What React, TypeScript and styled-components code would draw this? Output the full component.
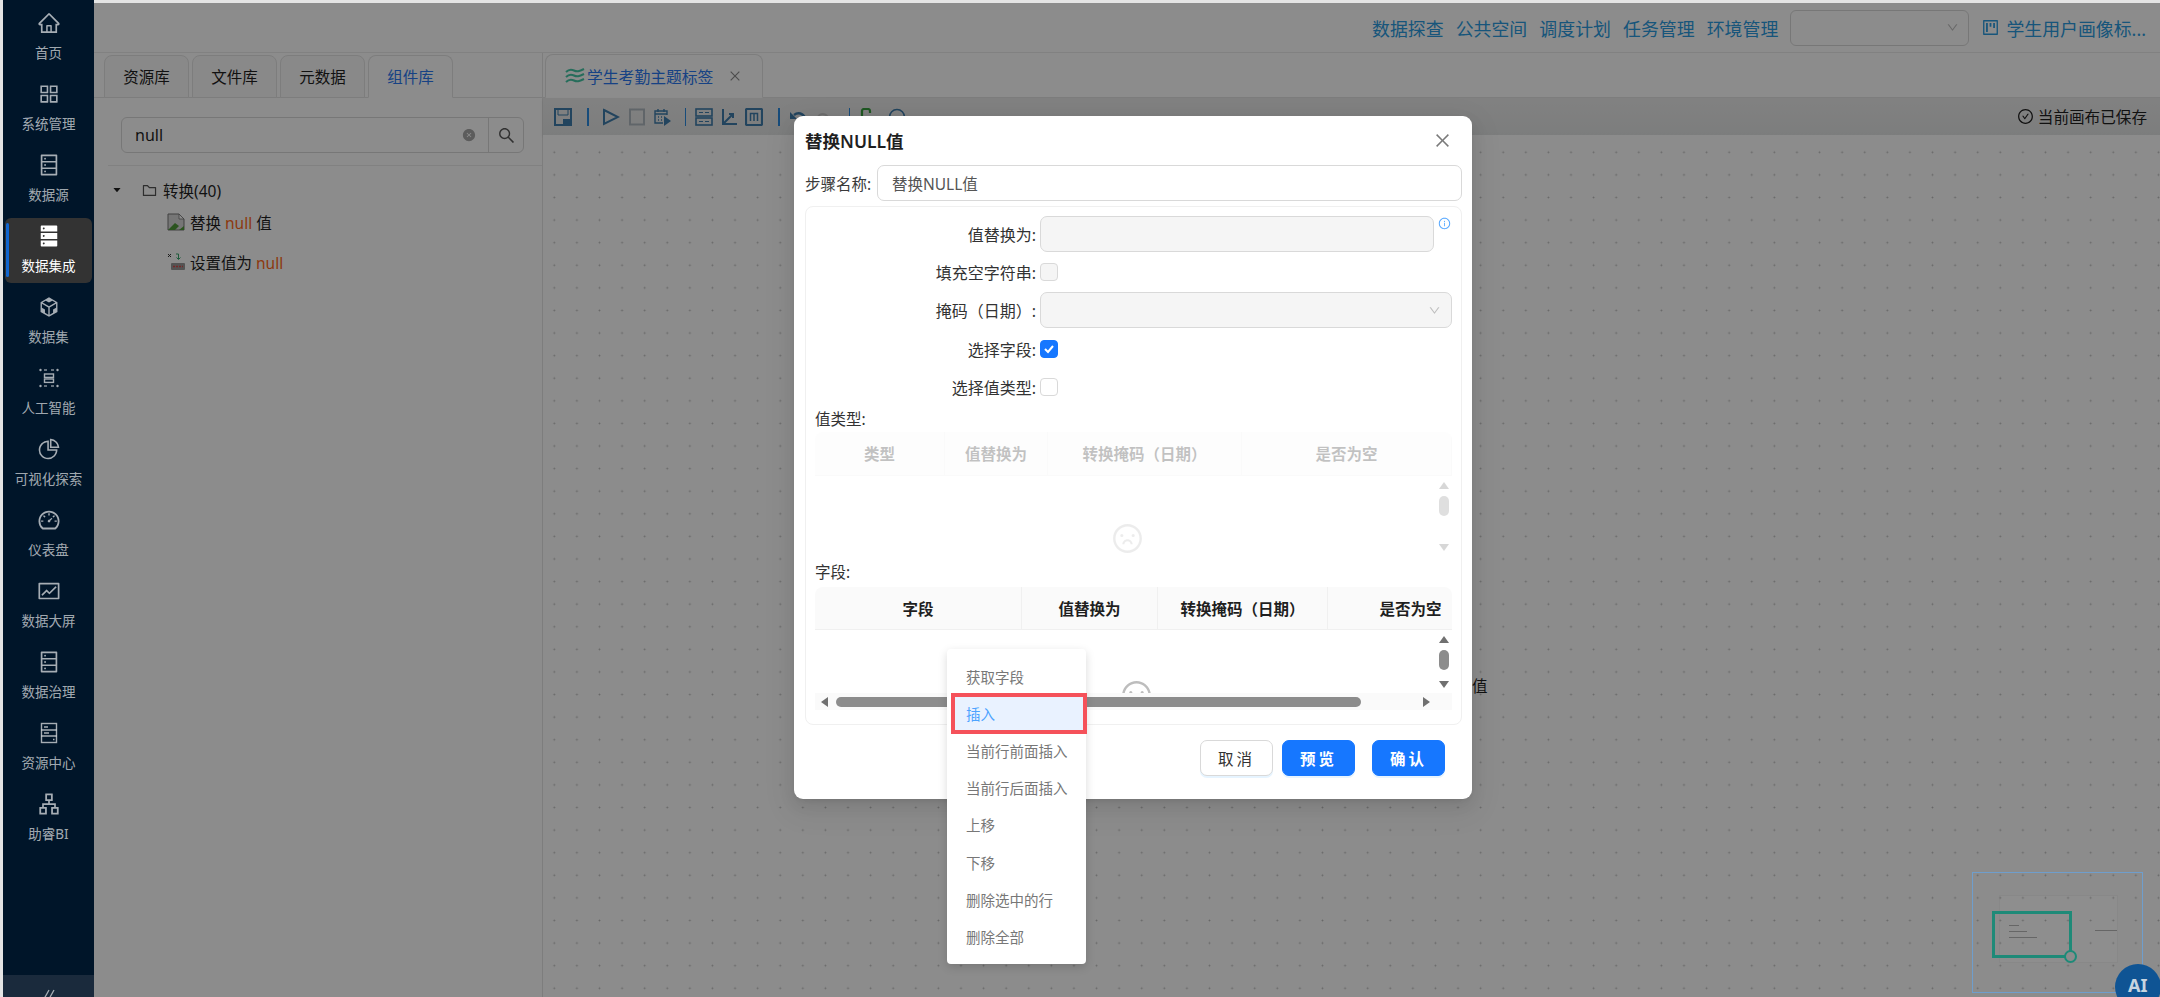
import React from "react";
import styled, { createGlobalStyle } from "styled-components";
import {
  AiOutlineHome,
  AiOutlineAppstore,
  AiOutlineDatabase,
  AiFillDatabase,
  AiOutlineCodeSandbox,
  AiOutlinePieChart,
  AiOutlineDashboard,
  AiOutlineFund,
  AiOutlineApartment,
  AiOutlineSearch,
  AiFillCloseCircle,
  AiOutlineFolder,
  AiFillCaretDown,
  AiOutlineClose,
  AiOutlineDown,
  AiOutlineInfoCircle,
  AiOutlineFrown,
  AiOutlineCheckCircle,
  AiOutlineProject,
} from "react-icons/ai";

const GlobalStyle = createGlobalStyle`
  html, body {
    margin: 0;
    height: 100%;
    background: #e4e4e4;
    overflow: hidden;
  }
  body {
    font-family: "Noto Sans", "Noto Sans CJK SC", sans-serif;
    font-size: 15.5px;
    color: #1f1f1f;
  }
  * { box-sizing: border-box; }
`;

const Page = styled.div`
  display: flex;
  height: 997px;
  padding-left: 3px;
`;

/* left nav, sits above the modal mask */
const Sidebar = styled.aside`
  width: 91px;
  flex: none;
  display: flex;
  flex-direction: column;
  background: #001529;
  position: relative;
`;
const NavList = styled.nav`
  flex: 1;
  display: flex;
  flex-direction: column;
  gap: 6px;
  padding: 5px 2px 0;
`;
const NavItem = styled.div<{ $active?: boolean }>`
  position: relative;
  height: 65px;
  display: flex;
  flex-direction: column;
  align-items: center;
  padding-top: 6px;
  gap: 9px;
  border-radius: 6px;
  font-size: 13.5px;
  line-height: 18px;
  color: ${(p) => (p.$active ? "#fff" : "rgba(255,255,255,.65)")};
  background: ${(p) => (p.$active ? "#333" : "transparent")};
  svg {
    width: 24px;
    height: 24px;
  }
  &::before {
    content: "";
    display: ${(p) => (p.$active ? "block" : "none")};
    position: absolute;
    left: 1px;
    top: 5px;
    bottom: 6px;
    width: 3px;
    border-radius: 2px;
    background: #1266cf;
  }
`;
const Collapse = styled.div`
  height: 22px;
  background: #1a2a3c;
  color: #a6adb4;
  display: flex;
  justify-content: center;
  align-items: flex-start;
  padding-top: 14px;
  overflow: hidden;
`;

const Main = styled.main`
  position: relative;
  flex: 1;
  min-width: 0;
  margin-top: 3px;
  display: flex;
  flex-direction: column;
  background: #fff;
`;
const Mask = styled.div`
  position: absolute;
  inset: 0;
  z-index: 10;
  background: rgba(0, 0, 0, 0.45);
`;

const Header = styled.header`
  height: 50px;
  flex: none;
  display: flex;
  justify-content: flex-end;
  align-items: center;
  padding-right: 14px;
  border-bottom: 1px solid #ececec;
`;
const HeaderLink = styled.a`
  font-size: 17.9px;
  white-space: nowrap;
  color: #2a9be0;
  margin-left: 12.1px;
`;
const ProjectSelect = styled.div`
  width: 179px;
  height: 36px;
  margin-left: 12px;
  border: 1px solid #d9d9d9;
  border-radius: 6px;
  display: flex;
  justify-content: flex-end;
  align-items: center;
  padding-right: 9px;
  color: #bfbfbf;
`;
const ProjectName = styled(HeaderLink)`
  display: flex;
  align-items: center;
  gap: 6px;
  svg {
    width: 19px;
    height: 19px;
  }
`;

const Body = styled.div`
  flex: 1;
  min-height: 0;
  display: flex;
`;

const LeftPanel = styled.section`
  width: 449px;
  flex: none;
  border-right: 1px solid #e4e4e4;
`;
const TabBar = styled.div<{ $pad: number }>`
  height: 45px;
  display: flex;
  align-items: flex-end;
  gap: 3px;
  padding-left: ${(p) => p.$pad}px;
  border-bottom: 1px solid #e4e4e4;
`;
const Tab = styled.div<{ $active?: boolean }>`
  width: 85px;
  height: 43px;
  margin-bottom: -1px;
  display: flex;
  justify-content: center;
  align-items: center;
  font-size: 15.5px;
  border: 1px solid #e4e4e4;
  border-bottom-color: ${(p) => (p.$active ? "#fff" : "#e4e4e4")};
  border-radius: 8px 8px 0 0;
  background: ${(p) => (p.$active ? "#fff" : "#fafafa")};
  color: ${(p) => (p.$active ? "#2a78f0" : "#1f1f1f")};
`;
const SearchRow = styled.div`
  margin-left: 14px;
  padding: 19px 0 12px 13px;
  border-bottom: 1px solid #ececec;
`;
const SearchBox = styled.div`
  width: 403px;
  height: 36px;
  display: flex;
  align-items: center;
  border: 1px solid #d9d9d9;
  border-radius: 6px;
  padding-left: 13px;
  font-size: 16px;
`;
const SearchText = styled.span`
  flex: 1;
`;
const SearchButton = styled.span`
  width: 35px;
  height: 100%;
  margin-left: 12px;
  display: flex;
  justify-content: center;
  align-items: center;
  border-left: 1px solid #d9d9d9;
  font-size: 19px;
  color: #595959;
`;
const Tree = styled.div`
  padding: 12px 0 0 18px;
  display: flex;
  flex-direction: column;
  font-size: 15.5px;
`;
const TreeRow = styled.div<{ $indent?: number; $top?: number }>`
  display: flex;
  align-items: center;
  height: 24px;
  gap: 5px;
  margin-top: ${(p) => p.$top ?? 0}px;
  padding-left: ${(p) => p.$indent ?? 0}px;
`;
const Hit = styled.span`
  color: #ff6a1a;
`;

const RightPanel = styled.section`
  flex: 1;
  min-width: 0;
  display: flex;
  flex-direction: column;
`;
const DocTab = styled.div`
  width: 218px;
  height: 44px;
  margin-bottom: -1px;
  display: flex;
  align-items: center;
  gap: 2px;
  padding-left: 19px;
  font-size: 15.8px;
  color: #2a78f0;
  background: #fff;
  border: 1px solid #e4e4e4;
  border-bottom-color: #fff;
  border-radius: 8px 8px 0 0;
`;
const DocClose = styled.span`
  display: flex;
  margin-left: 13px;
  color: #8c8c8c;
`;
const Toolbar = styled.div`
  height: 37px;
  flex: none;
  display: flex;
  align-items: center;
  padding-left: 11px;
  background: linear-gradient(180deg, #ececec, #e2e4e4);
  box-shadow: 0 2px 3px rgba(0, 0, 0, 0.1);
  color: #3e7cab;
`;
const ToolGroup = styled.div<{ $gap?: number }>`
  display: flex;
  align-items: center;
  gap: ${(p) => p.$gap ?? 0}px;
`;
const ToolSep = styled.i<{ $l: number; $r: number }>`
  width: 1.5px;
  height: 18px;
  margin: 0 ${(p) => p.$r}px 0 ${(p) => p.$l}px;
  background: #2a8be0;
`;
const Saved = styled.div`
  margin-left: auto;
  padding-right: 13px;
  display: flex;
  align-items: center;
  gap: 4px;
  font-size: 15.6px;
  color: #1f1f1f;
  svg {
    width: 17px;
    height: 17px;
  }
`;
const Canvas = styled.div`
  position: relative;
  flex: 1;
  background-color: #fff;
  background-image: radial-gradient(circle, #bdbdbd 0.8px, transparent 1.1px);
  background-size: 22.6px 22.6px;
  background-position: 0 6px;
`;
const NodeText = styled.span`
  position: absolute;
  left: 1378px;
  top: 671px;
`;

/* the dialog */
const Modal = styled.div`
  position: absolute;
  z-index: 20;
  left: 700px;
  top: 113px;
  width: 678px;
  height: 683px;
  padding: 0 10px 0 11px;
  display: flex;
  flex-direction: column;
  background: #fff;
  border-radius: 9px;
  box-shadow: 0 6px 16px rgba(0, 0, 0, 0.08), 0 3px 6px -4px rgba(0, 0, 0, 0.12),
    0 9px 28px 8px rgba(0, 0, 0, 0.05);
`;
const ModalHead = styled.div`
  height: 49px;
  flex: none;
  display: flex;
  justify-content: space-between;
  align-items: center;
  padding-right: 10px;
`;
const ModalTitle = styled.h2`
  margin: 0;
  font-size: 17.5px;
  font-weight: 600;
`;
const CloseBtn = styled.span`
  display: flex;
  font-size: 19px;
  color: #7a7a7a;
`;
const NameRow = styled.div`
  height: 36px;
  flex: none;
  display: flex;
  align-items: center;
  gap: 4px;
  font-size: 15.5px;
  color: #3a3a3a;
`;
const NameLabel = styled.span`
  width: 68px;
  flex: none;
  white-space: nowrap;
`;
const TextInput = styled.div<{ $disabled?: boolean; $w?: number }>`
  height: 36px;
  display: flex;
  align-items: center;
  justify-content: space-between;
  padding: 0 10px 0 14px;
  border: 1px solid #d9d9d9;
  border-radius: 7px;
  color: ${(p) => (p.$disabled ? "#bfbfbf" : "#555")};
  background: ${(p) => (p.$disabled ? "#f5f5f5" : "#fff")};
  flex: ${(p) => (p.$w ? "none" : "1")};
  width: ${(p) => (p.$w ? `${p.$w}px` : "auto")};
`;
const Card = styled.div`
  flex: none;
  height: 519px;
  margin-top: 5px;
  padding: 9px 9px 0;
  border: 1px solid #f0f0f0;
  border-radius: 8px;
`;
const FormRow = styled.div<{ $h: number }>`
  height: ${(p) => p.$h}px;
  display: flex;
  align-items: center;
  gap: 4px;
  margin-left: -8px;
`;
const FormLabel = styled.label`
  width: 229px;
  flex: none;
  text-align: right;
  font-size: 16px;
  color: #333;
  white-space: nowrap;
`;
const Check = styled.span<{ $on?: boolean; $off?: boolean }>`
  width: 18px;
  height: 18px;
  display: flex;
  justify-content: center;
  align-items: center;
  border-radius: 4px;
  border: 1px solid ${(p) => (p.$on ? "#1677ff" : "#d9d9d9")};
  background: ${(p) => (p.$on ? "#1677ff" : p.$off ? "#f5f5f5" : "#fff")};
`;
const Info = styled.span`
  display: flex;
  align-self: flex-start;
  margin: 1px 0 0 0;
  font-size: 13px;
  color: #4da3ff;
`;
const SectionLabel = styled.div<{ $h: number }>`
  height: ${(p) => p.$h}px;
  display: flex;
  align-items: center;
  color: #333;
`;
const TableBox = styled.div<{ $h: number; $faint?: boolean }>`
  width: 637px;
  height: ${(p) => p.$h}px;
  display: flex;
  flex-direction: column;
  overflow: hidden;
  border-radius: 8px 8px 0 0;
  opacity: ${(p) => (p.$faint ? 0.27 : 1)};
`;
const TableHead = styled.div<{ $cols: string; $h: number }>`
  height: ${(p) => p.$h}px;
  flex: none;
  display: grid;
  grid-template-columns: ${(p) => p.$cols};
  background: #fafafa;
  border-bottom: 1px solid #f0f0f0;
`;
const HeadCell = styled.div`
  display: flex;
  justify-content: center;
  align-items: center;
  font-weight: 600;
  white-space: nowrap;
  border-right: 1px solid #f0f0f0;
`;
const TableBody = styled.div`
  flex: 1;
  min-height: 0;
  display: flex;
`;
const EmptyArea = styled.div<{ $top: number; $shift: number }>`
  flex: 1;
  display: flex;
  justify-content: center;
  overflow: hidden;
  padding: ${(p) => p.$top}px 0 0 ${(p) => p.$shift}px;
  font-size: 33px;
  color: #bdbdbd;
`;
const VScroll = styled.div`
  width: 17px;
  flex: none;
  display: flex;
  flex-direction: column;
  align-items: center;
  padding: 6px 0 5px;
  background: #fff;
`;
const VThumb = styled.i`
  width: 10px;
  height: 20px;
  margin: 7px 0 3px;
  border-radius: 5px;
  background: #8c8c8c;
`;
const HScroll = styled.div`
  height: 17px;
  flex: none;
  display: flex;
  align-items: center;
  padding: 0 22px 0 6px;
  background: #fafafa;
`;
const HThumb = styled.i`
  width: 525px;
  height: 10px;
  margin: 0 auto 0 8px;
  border-radius: 5px;
  background: #8c8c8c;
`;
const Arrow = styled.i<{ $dir: "up" | "down" | "left" | "right" }>`
  width: 0;
  height: 0;
  flex: none;
  border-style: solid;
  border-color: transparent;
  border-width: ${(p) =>
    p.$dir === "up"
      ? "0 5.5px 7px"
      : p.$dir === "down"
        ? "7px 5.5px 0"
        : p.$dir === "left"
          ? "5.5px 7px 5.5px 0"
          : "5.5px 0 5.5px 7px"};
  ${(p) =>
    p.$dir === "up"
      ? "border-bottom-color: #707070;"
      : p.$dir === "down"
        ? "border-top-color: #707070; margin-top: auto;"
        : p.$dir === "left"
          ? "border-right-color: #707070;"
          : "border-left-color: #707070;"}
`;
const Footer = styled.div`
  display: flex;
  justify-content: flex-end;
  padding: 15px 17px 0 0;
`;
const Btn = styled.button<{ $primary?: boolean; $ml?: number }>`
  width: 73px;
  height: 36px;
  margin-left: ${(p) => p.$ml ?? 0}px;
  font: inherit;
  font-size: 15.5px;
  letter-spacing: 3px;
  font-weight: ${(p) => (p.$primary ? 600 : 400)};
  border-radius: 7px;
  border: 1px solid ${(p) => (p.$primary ? "#1677ff" : "#d9d9d9")};
  background: ${(p) => (p.$primary ? "#1677ff" : "#fff")};
  color: ${(p) => (p.$primary ? "#fff" : "#333")};
  box-shadow: 0 2px 0 rgba(5, 145, 255, 0.1);
`;

/* right click menu */
const Menu = styled.ul`
  position: absolute;
  left: 153px;
  top: 533px;
  width: 139px;
  margin: 0;
  padding: 8.5px 0 9px;
  list-style: none;
  background: #fff;
  border-radius: 4px;
  box-shadow: 0 3px 10px rgba(0, 0, 0, 0.15);
`;
const MenuItem = styled.li<{ $active?: boolean }>`
  position: relative;
  height: 37.2px;
  display: flex;
  align-items: center;
  padding-left: 19px;
  font-size: 14.5px;
  white-space: nowrap;
  color: ${(p) => (p.$active ? "#4da3ff" : "#777")};
  background: ${(p) =>
    p.$active ? "linear-gradient(90deg, #fff 4px, #e9f2ff 4px)" : "transparent"};
  &::after {
    content: "";
    display: ${(p) => (p.$active ? "block" : "none")};
    position: absolute;
    left: 4px;
    right: -1px;
    top: -2px;
    bottom: -2px;
    border: 4px solid #f5515a;
  }
`;

/* minimap and assistant button float over the canvas */
const MiniMap = styled.div`
  position: absolute;
  z-index: 15;
  left: 1878px;
  top: 869px;
  width: 171px;
  height: 121px;
  border: 1.5px solid #6f9ecc;
`;
const MiniPage = styled.div`
  position: absolute;
  left: 26px;
  top: 22px;
  width: 119px;
  height: 68px;
  background: rgba(255, 255, 255, 0.02);
  border: 1px solid rgba(0, 0, 0, 0.04);
`;
const MiniFrame = styled.div`
  position: absolute;
  left: 19px;
  top: 38px;
  width: 80px;
  height: 47px;
  padding-top: 6px;
  border: 3px solid #1e8a78;
`;
const MiniHandle = styled.i`
  position: absolute;
  right: -8px;
  bottom: -8px;
  width: 13px;
  height: 13px;
  border-radius: 50%;
  background: #8c8c8c;
  border: 2.5px solid #1e8a78;
`;
const MiniLine = styled.i<{ $w: number }>`
  display: block;
  width: ${(p) => p.$w}px;
  height: 1px;
  margin: 5px 0 0 14px;
  background: #666;
`;
const MiniNote = styled.i`
  position: absolute;
  right: 25px;
  top: 57px;
  width: 22px;
  height: 1px;
  background: #666;
`;
const AiBubble = styled.div`
  position: absolute;
  z-index: 15;
  left: 2021px;
  top: 961px;
  width: 46px;
  height: 46px;
  padding: 9px 0 0 13px;
  border-radius: 50%;
  background: #0f5494;
  color: #c8d4e0;
  font-size: 18px;
  font-weight: 700;
`;

const IconSvg = styled.svg<{ $w?: number }>`
  width: ${(p) => p.$w ?? 18}px;
  height: 18px;
  flex: none;
  display: block;
`;

const ScanIcon = () => (
  <svg viewBox="0 0 24 24" fill="none" stroke="currentColor" strokeWidth="1.4">
    <rect x="7.5" y="8" width="9" height="3.4" />
    <rect x="7.5" y="13" width="9" height="3.4" />
    <g fill="currentColor" stroke="none">
      <circle cx="3.5" cy="4" r="1.2" />
      <circle cx="20.5" cy="4" r="1.2" />
      <circle cx="3.5" cy="20" r="1.2" />
      <circle cx="20.5" cy="20" r="1.2" />
      <rect x="7" y="3.4" width="3" height="1.2" />
      <rect x="14" y="3.4" width="3" height="1.2" />
      <rect x="7" y="19.4" width="3" height="1.2" />
      <rect x="14" y="19.4" width="3" height="1.2" />
    </g>
  </svg>
);
const ServerIcon = () => (
  <svg viewBox="0 0 24 24" fill="none" stroke="currentColor" strokeWidth="1.4">
    <rect x="4.5" y="2.5" width="15" height="19" />
    <path d="M4.500 9h15M4.500 15h15M7 6h4M7 12h5M16 18.500h1.500" />
  </svg>
);
const WaveIcon = () => (
  <IconSvg viewBox="0 0 20 18" $w={20} fill="none" stroke="#46c7a6" strokeWidth="2">
    <path d="M1 5c3-3 5-3 8-1.500s5 1 10-1.500M1 10c3-3 5-3 8-1.500s5 1 10-1.500M1 15c3-3 5-3 8-1.500s5 1 10-1.500" />
  </IconSvg>
);
const BrokenImage = () => (
  <IconSvg viewBox="0 0 18 18">
    <path d="M1 1h11l5 5v11H1z" fill="#d8d8d8" stroke="#777" strokeWidth="1" />
    <path d="M1 17l7-7 4 3-4 4z" fill="#4f9a3a" />
    <path d="M12 17l5-4v4z" fill="#4f9a3a" />
    <path d="M12 1l5 5h-5z" fill="#fff" stroke="#777" strokeWidth=".8" />
  </IconSvg>
);
const SetValueIcon = () => (
  <IconSvg viewBox="0 0 18 18" fill="none">
    <path d="M1 1l3 3M4 1L1 4" stroke="#333" strokeWidth="1" />
    <path d="M9 1h2.500v5M9.500 4.500l2 2 2-2" stroke="#3aa76d" strokeWidth="1" />
    <rect x="4" y="10" width="14" height="7" rx="1" fill="#9a9a9a" />
    <path d="M6 13.500h10" stroke="#d84a4a" strokeWidth="1.500" strokeDasharray="2 1" />
  </IconSvg>
);

const DoubleChevron = () => (
  <svg width="14" height="16" viewBox="0 0 14 16" fill="none" stroke="currentColor" strokeWidth="1.3">
    <path d="M7 1L2 10M12 1L7 10" />
  </svg>
);

const toolStroke = { fill: "none", stroke: "currentColor" };
const SaveTool = () => (
  <IconSvg viewBox="0 0 18 18" {...toolStroke} strokeWidth="2">
    <rect x="1" y="1" width="16" height="16" />
    <path d="M4 2v5h10V2" strokeWidth="1" />
    <rect x="9" y="11" width="8" height="6" fill="currentColor" stroke="none" />
  </IconSvg>
);
const PlayTool = () => (
  <IconSvg viewBox="0 0 18 18" $w={18} {...toolStroke} strokeWidth="2">
    <path d="M2 2l14 7-14 7z" />
  </IconSvg>
);
const StopTool = () => (
  <IconSvg viewBox="0 0 16 18" $w={16} fill="none" stroke="#b0b8c0" strokeWidth="2">
    <rect x="1" y="1.500" width="14" height="15" />
  </IconSvg>
);
const ScheduleTool = () => (
  <IconSvg viewBox="0 0 18 18" {...toolStroke} strokeWidth="1.4">
    <path d="M9 15H1V3h12v4M4 1v3M10 1v3M1 6h12" />
    <path d="M4 9h1M7 9h1M4 12h1M7 12h1" />
    <path d="M10 8l7 5-7 5z" fill="currentColor" stroke="none" />
  </IconSvg>
);
const LayoutTool = () => (
  <IconSvg viewBox="0 0 18 18" {...toolStroke} strokeWidth="1.6">
    <rect x="1" y="1" width="16" height="7" />
    <rect x="1" y="10" width="16" height="7" />
    <path d="M4 4.500h4M10 4.500h4M4 13.500h4M10 13.500h4" strokeWidth="1" />
  </IconSvg>
);
const AxisTool = () => (
  <IconSvg viewBox="0 0 18 18" {...toolStroke} strokeWidth="2">
    <path d="M3 1v15h14M3 16L13 6M9 6h4v4" />
  </IconSvg>
);
const MatrixTool = () => (
  <IconSvg viewBox="0 0 18 18" {...toolStroke} strokeWidth="2.2">
    <rect x="1" y="1" width="16" height="16" rx="1" />
    <path d="M5.500 13V5.500h7V13M9 5.500V13" strokeWidth="1.500" />
  </IconSvg>
);
const UndoTool = () => (
  <IconSvg viewBox="0 0 18 18" {...toolStroke} strokeWidth="2.4">
    <path d="M5 7c4-3 9-2 11 3" />
    <path d="M1 4v7h7z" fill="currentColor" stroke="none" />
  </IconSvg>
);
const RedoTool = () => (
  <IconSvg viewBox="0 0 12 18" $w={12} fill="none" stroke="#c9c9c9" strokeWidth="2">
    <path d="M1 9c2-4 7-4 10 0" />
  </IconSvg>
);
const LinkTool = () => (
  <IconSvg viewBox="0 0 12 18" $w={12} fill="none" stroke="#3aa040" strokeWidth="2.2">
    <path d="M2 14V3a2 2 0 0 1 2-2h4a2 2 0 0 1 2 2v2" />
  </IconSvg>
);
const RingTool = () => (
  <IconSvg viewBox="0 0 18 18" {...toolStroke} strokeWidth="1.6">
    <circle cx="9" cy="9" r="7.500" />
  </IconSvg>
);

const navItems: { label: string; icon: React.ReactNode; active?: boolean }[] = [
  { label: "首页", icon: <AiOutlineHome /> },
  { label: "系统管理", icon: <AiOutlineAppstore /> },
  { label: "数据源", icon: <AiOutlineDatabase /> },
  { label: "数据集成", icon: <AiFillDatabase />, active: true },
  { label: "数据集", icon: <AiOutlineCodeSandbox /> },
  { label: "人工智能", icon: <ScanIcon /> },
  { label: "可视化探索", icon: <AiOutlinePieChart /> },
  { label: "仪表盘", icon: <AiOutlineDashboard /> },
  { label: "数据大屏", icon: <AiOutlineFund /> },
  { label: "数据治理", icon: <AiOutlineDatabase /> },
  { label: "资源中心", icon: <ServerIcon /> },
  { label: "助睿BI", icon: <AiOutlineApartment /> },
];

const menuItems = ["获取字段", "插入", "当前行前面插入", "当前行后面插入", "上移", "下移", "删除选中的行", "删除全部"];

const valueCols = ["类型", "值替换为", "转换掩码（日期）", "是否为空"];
const fieldCols = ["字段", "值替换为", "转换掩码（日期）", "是否为空"];

export default function App() {
  return (
    <Page>
      <GlobalStyle />
      <Sidebar>
        <NavList>
          {navItems.map((item) => (
            <NavItem key={item.label} $active={item.active}>
              {item.icon}
              <span>{item.label}</span>
            </NavItem>
          ))}
        </NavList>
        <Collapse>
          <DoubleChevron />
        </Collapse>
      </Sidebar>

      <Main>
        <Header>
          <HeaderLink>数据探查</HeaderLink>
          <HeaderLink>公共空间</HeaderLink>
          <HeaderLink>调度计划</HeaderLink>
          <HeaderLink>任务管理</HeaderLink>
          <HeaderLink>环境管理</HeaderLink>
          <ProjectSelect>
            <AiOutlineDown size={13} />
          </ProjectSelect>
          <ProjectName>
            <AiOutlineProject />
            学生用户画像标...
          </ProjectName>
        </Header>

        <Body>
          <LeftPanel>
            <TabBar $pad={10}>
              <Tab>资源库</Tab>
              <Tab>文件库</Tab>
              <Tab>元数据</Tab>
              <Tab $active>组件库</Tab>
            </TabBar>
            <SearchRow>
              <SearchBox>
                <SearchText>null</SearchText>
                <AiFillCloseCircle size={14} color="#a8a8a8" />
                <SearchButton>
                  <AiOutlineSearch />
                </SearchButton>
              </SearchBox>
            </SearchRow>
            <Tree>
              <TreeRow>
                <AiFillCaretDown size={10} />
                <TreeRow as="span" $indent={14}>
                  <AiOutlineFolder size={17} color="#555" />
                  转换(40)
                </TreeRow>
              </TreeRow>
              <TreeRow $indent={55} $top={8}>
                <BrokenImage />
                <span>
                  替换 <Hit>null</Hit> 值
                </span>
              </TreeRow>
              <TreeRow $indent={55} $top={16}>
                <SetValueIcon />
                <span>
                  设置值为 <Hit>null</Hit>
                </span>
              </TreeRow>
            </Tree>
          </LeftPanel>

          <RightPanel>
            <TabBar $pad={2}>
              <DocTab>
                <WaveIcon />
                学生考勤主题标签
                <DocClose>
                  <AiOutlineClose size={14} />
                </DocClose>
              </DocTab>
            </TabBar>
            <Toolbar>
              <SaveTool />
              <ToolSep $l={15} $r={13} />
              <ToolGroup $gap={9}>
                <PlayTool />
                <StopTool />
                <ScheduleTool />
              </ToolGroup>
              <ToolSep $l={13} $r={9} />
              <ToolGroup $gap={7}>
                <LayoutTool />
                <AxisTool />
                <MatrixTool />
              </ToolGroup>
              <ToolSep $l={15} $r={9} />
              <ToolGroup $gap={10}>
                <UndoTool />
                <RedoTool />
              </ToolGroup>
              <ToolSep $l={20} $r={10} />
              <ToolGroup $gap={16}>
                <LinkTool />
                <RingTool />
              </ToolGroup>
              <Saved>
                <AiOutlineCheckCircle />
                当前画布已保存
              </Saved>
            </Toolbar>
            <Canvas />
          </RightPanel>
        </Body>
        <NodeText>值</NodeText>

        <Mask />

        <MiniMap>
          <MiniPage />
          <MiniFrame>
            <MiniLine $w={10} />
            <MiniLine $w={18} />
            <MiniLine $w={28} />
            <MiniHandle />
          </MiniFrame>
          <MiniNote />
        </MiniMap>
        <AiBubble>AI</AiBubble>

        <Modal>
          <ModalHead>
            <ModalTitle>替换NULL值</ModalTitle>
            <CloseBtn>
              <AiOutlineClose />
            </CloseBtn>
          </ModalHead>
          <NameRow>
            <NameLabel>步骤名称:</NameLabel>
            <TextInput>替换NULL值</TextInput>
          </NameRow>
          <Card>
            <FormRow $h={36}>
              <FormLabel>值替换为:</FormLabel>
              <TextInput $disabled $w={394} />
              <Info>
                <AiOutlineInfoCircle />
              </Info>
            </FormRow>
            <FormRow $h={39}>
              <FormLabel>填充空字符串:</FormLabel>
              <Check $off />
            </FormRow>
            <FormRow $h={38}>
              <FormLabel>掩码（日期）:</FormLabel>
              <TextInput $disabled $w={412}>
                <span />
                <AiOutlineDown size={13} />
              </TextInput>
            </FormRow>
            <FormRow $h={40}>
              <FormLabel>选择字段:</FormLabel>
              <Check $on>
                <svg width="12" height="12" viewBox="0 0 12 12" fill="none" stroke="#fff" strokeWidth="2">
                  <path d="M2 6l3 3 5-6" />
                </svg>
              </Check>
            </FormRow>
            <FormRow $h={36}>
              <FormLabel>选择值类型:</FormLabel>
              <Check />
            </FormRow>
            <SectionLabel $h={27}>值类型:</SectionLabel>
            <TableBox $h={124} $faint>
              <TableHead $cols="130px 103px 194px 1fr" $h={44}>
                {valueCols.map((c) => (
                  <HeadCell key={c}>{c}</HeadCell>
                ))}
              </TableHead>
              <TableBody>
                <EmptyArea $top={46} $shift={4}>
                  <AiOutlineFrown />
                </EmptyArea>
                <VScroll>
                  <Arrow $dir="up" />
                  <VThumb />
                  <Arrow $dir="down" />
                </VScroll>
              </TableBody>
            </TableBox>
            <SectionLabel $h={31}>字段:</SectionLabel>
            <TableBox $h={123}>
              <TableHead $cols="207px 136px 170px 166px" $h={43}>
                {fieldCols.map((c) => (
                  <HeadCell key={c}>{c}</HeadCell>
                ))}
              </TableHead>
              <TableBody>
                <EmptyArea $top={49} $shift={22}>
                  <AiOutlineFrown />
                </EmptyArea>
                <VScroll>
                  <Arrow $dir="up" />
                  <VThumb />
                  <Arrow $dir="down" />
                </VScroll>
              </TableBody>
              <HScroll>
                <Arrow $dir="left" />
                <HThumb />
                <Arrow $dir="right" />
              </HScroll>
            </TableBox>
          </Card>
          <Footer>
            <Btn>取消</Btn>
            <Btn $primary $ml={9}>
              预览
            </Btn>
            <Btn $primary $ml={17}>
              确认
            </Btn>
          </Footer>
          <Menu>
            {menuItems.map((m) => (
              <MenuItem key={m} $active={m === "插入"}>
                {m}
              </MenuItem>
            ))}
          </Menu>
        </Modal>
      </Main>
    </Page>
  );
}
